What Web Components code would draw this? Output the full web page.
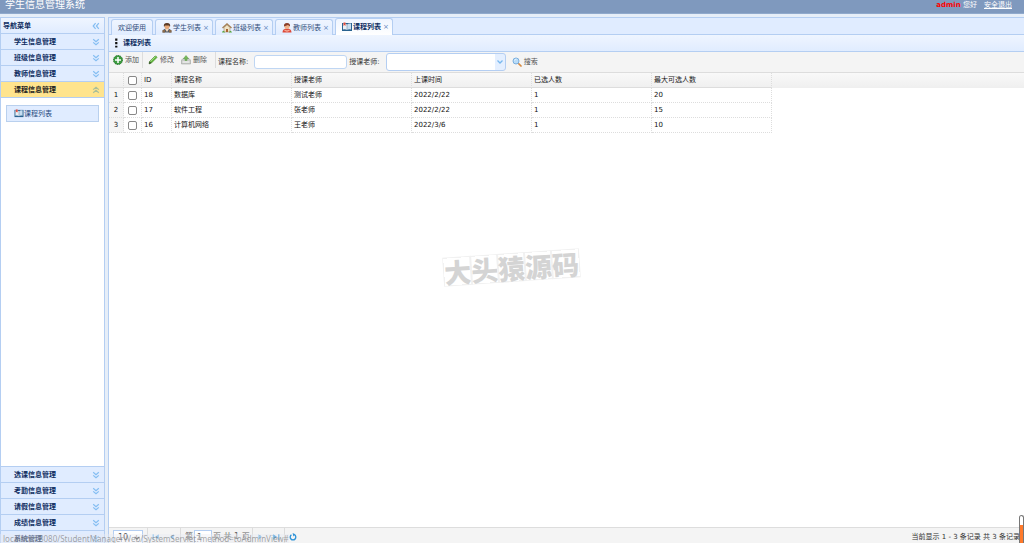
<!DOCTYPE html>
<html lang="zh-CN">
<head>
<meta charset="utf-8">
<title>学生信息管理系统</title>
<style>
html,body{margin:0;height:100%;overflow:hidden}
body{font:7px/14px "DejaVu Sans","Noto Sans CJK SC",sans-serif;color:#222;background:#fff;--line:#b4cef2;--pale:#e0ecff;--navy:#0e2d5f}
</style>
</head>
<body>
<student-app></student-app>
<script>
const define=(name,html,setup)=>customElements.define(name,class extends HTMLElement{
  constructor(){
    super();
    const t=document.createElement('template');
    t.innerHTML='<style>*{box-sizing:border-box}button,input,select{font:inherit;color:inherit;margin:0}button{border:0;background:none;padding:0}</style>'+html;
    this.attachShadow({mode:'open'}).append(t.content.cloneNode(true));
  }
  connectedCallback(){if(setup)setup(this,this.shadowRoot)}
});

const icons={
  student:'<path d="M1 19q0-8 9-8t9 8z" fill="#555a63"/><path d="M6 12l4 6 4-6z" fill="#f3d9bd"/><circle cx="10" cy="7" r="5" fill="#e8a877"/><path d="M4 8Q2 0 10 0t6 8l-2-3H6z" fill="#5b3a25"/><path d="M1 14h5v5H1zM14 14h5v5h-5z" fill="#8a6a4a"/>',
  home:'<path d="M4 9v9h12V9l-6-6z" fill="#f0e3c4" stroke="#8d7a5a"/><path d="M1 10l9-8 9 8" fill="none" stroke="#a5825a" stroke-width="3"/><path d="M8 12h4v6H8z" fill="#a86432"/><path d="M0 19q2-7 6 0zM14 19q3-7 6 0z" fill="#58a63f"/>',
  teacher:'<path d="M1 19q0-8 9-8t9 8z" fill="#dd4a3a"/><circle cx="10" cy="7" r="5" fill="#f0b188"/><path d="M4 7Q3 0 10 0t6 7l-4-3z" fill="#8a3f2a"/><path d="M5 14q5 4 10 0" stroke="#f7b09b" fill="none" stroke-width="2.5"/>',
  book:'<path d="M0 2h20v16H0z" fill="#28628f"/><path d="M2 3q5-1 8 2v11q-3-2-8-1z" fill="#e9eef4"/><path d="M18 3q-5-1-8 2v11q3-2 8-1z" fill="#c6ddf0"/><path d="M3 1h4v7L5 6 3 8z" fill="#e24b3a"/><path d="M10 4v12" stroke="#5d7f9d"/>',
  add:'<circle cx="10" cy="10" r="9" fill="#3c9b3f" stroke="#27752d" stroke-dasharray="3 1.5" stroke-width="2"/><path d="M10 4v12M4 10h12" stroke="#fff" stroke-width="3"/>',
  edit:'<path d="M2 18l1-5L14 2q3-1 4 3L7 16z" fill="#63b83e" stroke="#3d8525"/><path d="M2 18l1-5 4 3z" fill="#39442f"/><path d="M5 13L15 3" stroke="#b8e59d" stroke-width="1.5"/>',
  remove:'<path d="M1 10l3-3h12l3 3v8H1z" fill="#c8cac8" stroke="#959995"/><path d="M3 14h14" stroke="#fff" stroke-width="2"/><path d="M10 1l5 6h-3v4H8V7H5z" fill="#75b85a" stroke="#5b9a45"/>',
  search:'<path d="M12 12l6 6" stroke="#d78b42" stroke-width="3.5" stroke-linecap="round"/><circle cx="8" cy="8" r="6" fill="#b9dcf8" stroke="#79aede" stroke-width="2"/><path d="M5 7q1-3 4-3" stroke="#fff" fill="none" stroke-width="1.5"/>',
  down:'<path d="M3 3l7 6 7-6M3 11l7 6 7-6" fill="none" stroke="#84bdf2" stroke-width="3"/>',
  up:'<path d="M3 9l7-6 7 6M3 17l7-6 7 6" fill="none" stroke="#a9bf9b" stroke-width="3"/>',
  left:'<path d="M9 3l-6 7 6 7M17 3l-6 7 6 7" fill="none" stroke="#84bdf2" stroke-width="3"/>',
  first:'<path d="M3 3v14" stroke="#6fb5ea" stroke-width="3"/><path d="M17 3v14L7 10z" fill="#6fb5ea"/>',
  prev:'<path d="M14 3v14L5 10z" fill="#6fb5ea"/>',
  next:'<path d="M6 3v14l9-7z" fill="#6fb5ea"/>',
  last:'<path d="M17 3v14" stroke="#2e93d8" stroke-width="3"/><path d="M3 3v14l10-7z" fill="#2e93d8"/>',
  reload:'<path d="M14 4.5A7 7 0 1 1 6 4.5" fill="none" stroke="#2e93d8" stroke-width="3.4"/><path d="M9 0l7 3-5 6z" fill="#2e93d8"/>',
  dots:'<path d="M7 0h5v5H7zM7 8h5v5H7zM7 16h5v4H7z" fill="#111"/>'
};
define('ui-icon','<style>:host{display:block;flex:none;width:8px;height:8px}svg{display:block;width:100%;height:100%}</style><svg viewBox="0 0 20 20" aria-hidden="true"></svg>',
  (el,r)=>r.querySelector('svg').innerHTML=icons[el.getAttribute('name')]);

define('app-header',`<style>
:host{display:flex;flex:none;justify-content:space-between;height:14px;background:#7f99be;color:#fff;border-bottom:1px solid #8fa9cc;overflow:hidden}
h1{margin:0 0 0 5px;font-size:10px;line-height:10px;font-weight:400}
div{display:flex;gap:7px;padding-right:12px;line-height:10px}b{color:#f00}a{color:#fff}
</style><h1>学生信息管理系统</h1><div><span><b>admin</b> 您好</span><a href="#">安全退出</a></div>`);

define('nav-item',`<style>
:host{display:block;flex:none;overflow:hidden;height:16px}
button{display:flex;width:100%;height:16px;align-items:center;justify-content:space-between;padding:0 4px 0 13px;background:var(--pale);border-bottom:1px solid var(--line);color:var(--navy);font-weight:700;line-height:14px}
:host([open]) button{background:#ffe48d;color:#222}
:host([clipped]){height:12px}
</style><button><slot></slot><ui-icon name="down"></ui-icon></button>`,
(el,r)=>{if(el.hasAttribute('open')){r.querySelector('ui-icon').remove();const i=document.createElement('ui-icon');i.setAttribute('name','up');r.querySelector('button').append(i)}});

define('nav-panel',`<style>
:host{display:flex;flex-direction:column;flex:none;width:105px;border:1px solid var(--line);border-bottom:0;min-height:0;background:#fff}
header{display:flex;flex:none;align-items:center;justify-content:space-between;height:16px;padding:0 4px 0 2px;background:linear-gradient(#eff5ff,#e0ecff);border-bottom:1px solid var(--line);font-weight:700;color:var(--navy)}
.body{flex:1;min-height:0;padding:7px 5px 0;border-bottom:1px solid var(--line)}
a{display:flex;align-items:center;height:17px;padding-left:7px;background:var(--pale);border:1px solid #b9d0ee;color:#264a80;text-decoration:none}
a ui-icon{width:10px;height:9px}
</style><header>导航菜单<ui-icon name="left"></ui-icon></header>
<nav-item>学生信息管理</nav-item><nav-item>班级信息管理</nav-item><nav-item>教师信息管理</nav-item><nav-item open>课程信息管理</nav-item>
<div class="body"><a href="#"><ui-icon name="book"></ui-icon>课程列表</a></div>
<nav-item>选课信息管理</nav-item><nav-item>考勤信息管理</nav-item><nav-item>请假信息管理</nav-item><nav-item>成绩信息管理</nav-item><nav-item clipped>系统管理</nav-item>`);

define('tab-item',`<style>
:host{display:block}
button{display:flex;align-items:center;gap:1px;width:58px;height:16px;padding:0 0 0 6px;border:1px solid var(--line);border-bottom:0;border-radius:3px 3px 0 0;background:linear-gradient(#eff5ff,#e0ecff);color:#33507c;line-height:14px}
:host([plain]) button{width:auto;padding:0 6px}
:host([selected]) button{height:17px;background:linear-gradient(#eff5ff,#fff);color:var(--navy);font-weight:700}
ui-icon{width:10px;height:10px}i{font-style:normal;font-weight:400;color:#5f86bd;margin-left:1px}
:host([plain]) i{display:none}
</style><button role="tab"><slot></slot><i>×</i></button>`,
(el,r)=>{const n=el.getAttribute('icon');if(n){const i=document.createElement('ui-icon');i.setAttribute('name',n);r.querySelector('button').prepend(i)}});

define('tab-strip',`<style>
:host{display:flex;flex:none;align-items:flex-end;gap:2px;height:18px;padding-left:2px;background:var(--pale);box-shadow:inset 0 -1px var(--line);border-top:1px solid var(--line)}
</style><slot></slot>`);

define('tool-bar',`<style>
:host{display:flex;flex:none;align-items:center;height:21px;padding-left:4px;background:#f4f4f4;border-bottom:1px solid #ddd;color:#333}
button{display:flex;align-items:center;gap:2px;height:16px;color:#555;margin:0 7px 4px 0}
button ui-icon{width:10px;height:10px}
.sep{padding-right:3px;margin-right:5px;border-right:1px solid #ddd}
.del{padding-right:8px;margin-right:2px}
input{width:93px;height:14px;margin:0 2px 0 6px;border:1px solid #bfd6f3;border-radius:3px;background:#fff;padding:0 3px}
.pick{position:relative;display:block;margin:0 6px 0 6px}
select{display:block;appearance:none;width:120px;height:18px;border:1px solid #b4cef2;border-radius:3px;background:linear-gradient(90deg,#fff 108px,#e4efff 108px)}
.pick svg{position:absolute;right:3px;top:6px;width:6px;height:6px;pointer-events:none}
.find{margin:0}
</style>
<button class="sep"><ui-icon name="add"></ui-icon>添加</button><button><ui-icon name="edit"></ui-icon>修改</button><button class="sep del"><ui-icon name="remove"></ui-icon>删除</button>
<label for="course">课程名称:</label><input id="course" type="text">
<label for="teacher">授课老师:</label><span class="pick"><select id="teacher"><option></option></select><svg viewBox="0 0 12 12"><path d="M1 3l5 5 5-5" fill="none" stroke="#78b8ee" stroke-width="2.5"/></svg></span>
<button class="find"><ui-icon name="search"></ui-icon>搜索</button>`);

define('course-grid',`<style>
:host{display:block;flex:1;min-height:0;background:linear-gradient(#f9f9f9,#efefef) top/100% 15px no-repeat}
table{border-collapse:separate;border-spacing:0;table-layout:fixed;width:663px;line-height:14px}
th,td{height:15px;padding:0 2px;font-weight:400;text-align:left;border-right:1px dotted #ddd;border-bottom:1px dotted #ddd;white-space:nowrap}
th{border-bottom:1px solid #ddd}td:first-child{background:#f5f5f5;text-align:center}
td{color:#111}
input{display:block;appearance:none;width:9px;height:9px;border:1px solid #888;border-radius:2px;background:#fff;margin:0 0 0 2px}
</style><table><colgroup><col style="width:15px"><col style="width:18px"><col style="width:30px"><col span="5" style="width:120px"></colgroup>
<thead><tr><th></th><th><input type="checkbox" aria-label="全选"></th><th>ID</th><th>课程名称</th><th>授课老师</th><th>上课时间</th><th>已选人数</th><th>最大可选人数</th></tr></thead><tbody></tbody></table>`,
(el,r)=>r.querySelector('tbody').innerHTML=[[18,'数据库','测试老师','2022/2/22',1,20],[17,'软件工程','张老师','2022/2/22',1,15],[16,'计算机网络','王老师','2022/3/6',1,10]]
 .map((row,i)=>`<tr><td>${i+1}</td><td><input type="checkbox" aria-label="${row[1]}"></td>${row.map(c=>`<td>${c}</td>`).join('')}</tr>`).join(''));

define('pager-bar',`<style>
:host{display:flex;flex:none;height:16px;padding:0 4px;overflow:hidden;align-items:flex-start;background:#f4f4f4;border-top:1px solid #ddd;color:#333}
:host>*{flex:none}
.size{position:relative}.size svg{position:absolute;right:3px;top:7px;width:6px;height:6px}
select{display:block;appearance:none;width:30px;height:16px;margin-top:2px;padding:0 4px;border:1px solid #b4cef2;background:#fff;font-size:8px;color:#555}
.group{display:flex;align-items:center;height:18px;margin-left:4px;padding-left:4px;border-left:1px solid #ddd}
.group.move{gap:8px}.group.tail{margin-left:2px;padding-left:3px}.group button{display:block}
.page{gap:1px;font-size:8px;color:#666}.page input{width:18px;height:15px;border:1px solid #b4cef2;padding:0 2px;background:#fff}
ui-icon{width:8px;height:8px}
.info{margin-left:auto;line-height:18px}
</style><span class="size"><select aria-label="每页条数"><option>10</option></select><svg viewBox="0 0 10 10"><path d="M1 3l4 4 4-4" fill="none" stroke="#444" stroke-width="2"/></svg></span>
<div class="group move"><button aria-label="首页"><ui-icon name="first"></ui-icon></button><button aria-label="上一页"><ui-icon name="prev"></ui-icon></button></div>
<div class="group page"><label for="p">第</label><input id="p" type="text" value="1"><span>页 共 1 页</span></div>
<div class="group move tail"><button aria-label="下一页"><ui-icon name="next"></ui-icon></button><button aria-label="末页"><ui-icon name="last"></ui-icon></button></div>
<div class="group"><button aria-label="刷新"><ui-icon name="reload"></ui-icon></button></div>
<span class="info">当前显示 1 - 3 条记录 共 3 条记录</span>`);

define('water-mark',`<style>
:host{position:absolute;left:43.4%;top:46.7%;display:flex;transform:rotate(-4deg);font:900 27px/27px "Noto Sans CJK SC",sans-serif;color:#d4d4d4;pointer-events:none}
span{width:27px;height:27px;box-shadow:0 0 0 1px #f1f1f1}
</style><span>大</span><span>头</span><span>猿</span><span>源</span><span>码</span>`);

define('status-bubble',`<style>
:host{position:absolute;left:0;bottom:0;height:9px;padding-left:3px;overflow:hidden;background:rgba(232,236,242,.4);color:rgba(110,110,110,.6);font:8px/9px "Noto Sans",sans-serif;white-space:nowrap}
</style><slot></slot>`);
define('scroll-thumb',`<style>
:host{position:absolute;right:0;bottom:0;width:5px;height:28px;border:1px solid #777;border-bottom:0;border-radius:3px 3px 0 0;background:linear-gradient(#fff 9px,#ff7a2b 9px);box-sizing:border-box}
</style>`);

define('student-app',`<style>
:host{display:flex;flex-direction:column;position:relative;height:100vh;overflow:hidden;background:#e6eef8}
main{display:flex;flex:1;min-height:0;gap:3px;padding-top:3px}
section{display:flex;flex:1;flex-direction:column;min-width:0;border-left:1px solid var(--line);background:#fff}
h2{display:flex;flex:none;align-items:center;gap:2px;height:17px;margin:0;padding-left:3px;font-size:7px;line-height:14px;color:var(--navy);background:linear-gradient(#eff5ff,#e0ecff);border-bottom:1px solid var(--line)}
h2 ui-icon{width:9px;height:10px}
</style><app-header></app-header><main><nav-panel></nav-panel><section>
<tab-strip role="tablist"><tab-item plain>欢迎使用</tab-item><tab-item icon="student">学生列表</tab-item><tab-item icon="home">班级列表</tab-item><tab-item icon="teacher">教师列表</tab-item><tab-item icon="book" selected>课程列表</tab-item></tab-strip>
<h2><ui-icon name="dots"></ui-icon>课程列表</h2><tool-bar></tool-bar><course-grid></course-grid><pager-bar></pager-bar></section></main>
<water-mark></water-mark><status-bubble>localhost:8080/StudentManagerWeb/SystemServlet?method=toAdminView#</status-bubble><scroll-thumb></scroll-thumb>`);
</script>
</body>
</html>
